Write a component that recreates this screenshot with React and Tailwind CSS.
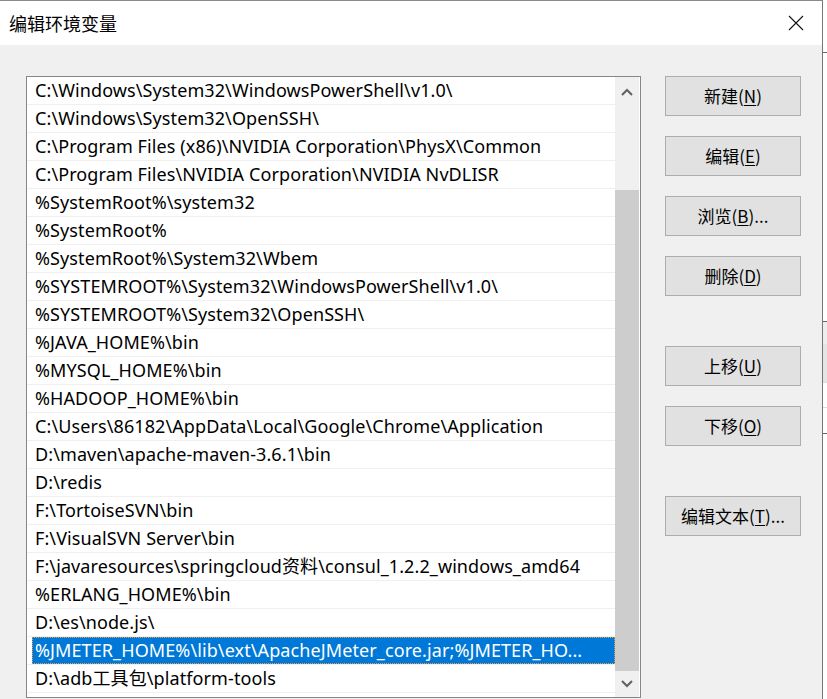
import React from "react";

const rows = [
  "C:\\Windows\\System32\\WindowsPowerShell\\v1.0\\",
  "C:\\Windows\\System32\\OpenSSH\\",
  "C:\\Program Files (x86)\\NVIDIA Corporation\\PhysX\\Common",
  "C:\\Program Files\\NVIDIA Corporation\\NVIDIA NvDLISR",
  "%SystemRoot%\\system32",
  "%SystemRoot%",
  "%SystemRoot%\\System32\\Wbem",
  "%SYSTEMROOT%\\System32\\WindowsPowerShell\\v1.0\\",
  "%SYSTEMROOT%\\System32\\OpenSSH\\",
  "%JAVA_HOME%\\bin",
  "%MYSQL_HOME%\\bin",
  "%HADOOP_HOME%\\bin",
  "C:\\Users\\86182\\AppData\\Local\\Google\\Chrome\\Application",
  "D:\\maven\\apache-maven-3.6.1\\bin",
  "D:\\redis",
  "F:\\TortoiseSVN\\bin",
  "F:\\VisualSVN Server\\bin",
  "F:\\javaresources\\springcloud资料\\consul_1.2.2_windows_amd64",
  "%ERLANG_HOME%\\bin",
  "D:\\es\\node.js\\",
  "%JMETER_HOME%\\lib\\ext\\ApacheJMeter_core.jar;%JMETER_HO...",
  "D:\\adb工具包\\platform-tools",
];

function Btn({ label, k, suffix = "" }) {
  return (
    <div className="w-[136px] h-[40px] bg-[#e1e1e1] border border-[#adadad] flex items-center justify-center text-[17px] text-black">
      <span>
        {label}(<span className="underline underline-offset-2">{k}</span>){suffix}
      </span>
    </div>
  );
}

export default function App() {
  return (
    <div
      className="w-[827px] h-[699px] flex bg-white overflow-hidden"
      style={{ fontFamily: '"Noto Sans", "Noto Sans CJK SC", sans-serif' }}
    >
      <div className="w-[823px] h-[699px] flex flex-col border-r border-[#777] border-t border-t-[#8a8a8a] bg-[#f0f0f0]">
        <div className="h-[44px] bg-white flex items-center justify-between pl-[9px] pr-[18px] shrink-0">
          <span className="text-[18px] text-black" style={{ fontFamily: '"Noto Sans CJK SC", sans-serif' }}>编辑环境变量</span>
          <svg width="16" height="16" viewBox="0 0 16 16">
            <path d="M1 1 L15 15 M15 1 L1 15" stroke="#111" strokeWidth="1.1" fill="none" />
          </svg>
        </div>
        <div className="flex pt-[31px] pl-[26px]">
          <div className="w-[615px] h-[622px] border border-[#828790] bg-white flex pr-[1px]">
            <div className="w-[588px] flex flex-col">
              {rows.map((r, i) => {
                const sel = i === 20;
                return (
                  <div key={i} className="h-[28px] flex flex-col shrink-0">
                    <div
                      className={
                        "h-[27px] flex items-center whitespace-nowrap overflow-hidden text-[18px] tracking-[0.1px] " +
                        (sel
                          ? "bg-[#0078d7] text-white ml-[5px] pl-[3px] outline-1 outline-dotted outline-[#f0a040] -outline-offset-1"
                          : "text-black pl-[8px]")
                      }
                    >
                      {r}
                    </div>
                    <div className="h-[1px] bg-[#f0f0f0]" />
                  </div>
                );
              })}
            </div>
            <div className="w-[24px] ml-auto bg-[#f0f0f0] flex flex-col">
              <div className="h-[30px] flex items-center justify-center shrink-0">
                <svg width="12" height="8" viewBox="0 0 12 8">
                  <path d="M1 7 L6 2 L11 7" stroke="#606060" strokeWidth="2" fill="none" />
                </svg>
              </div>
              <div className="h-[83px] shrink-0" />
              <div className="flex-1 bg-[#cdcdcd]" />
              <div className="h-[26px] flex items-center justify-center shrink-0">
                <svg width="12" height="8" viewBox="0 0 12 8">
                  <path d="M1 1 L6 6 L11 1" stroke="#606060" strokeWidth="2" fill="none" />
                </svg>
              </div>
            </div>
          </div>
          <div className="ml-[24px] flex flex-col" style={{ fontFamily: '"Noto Sans CJK SC", sans-serif' }}>
            <Btn label="新建" k="N" />
            <div className="h-[20px]" />
            <Btn label="编辑" k="E" />
            <div className="h-[20px]" />
            <Btn label="浏览" k="B" suffix="..." />
            <div className="h-[20px]" />
            <Btn label="删除" k="D" />
            <div className="h-[50px]" />
            <Btn label="上移" k="U" />
            <div className="h-[20px]" />
            <Btn label="下移" k="O" />
            <div className="h-[50px]" />
            <Btn label="编辑文本" k="T" suffix="..." />
          </div>
        </div>
      </div>
      <div className="flex-1 flex flex-col bg-white">
        <div className="h-[52px]" />
        <div className="h-[1px] bg-[#666]" />
        <div className="h-[268px]" />
        <div className="h-[1px] bg-[#666]" />
        <div className="h-[22px] bg-[#eee]" />
        <div className="h-[38px] bg-[#e5e5e5]" />
        <div className="h-[1px] bg-[#ddd]" />
        <div className="h-[24px]" />
        <div className="h-[1px] bg-[#ddd]" />
        <div className="h-[25px]" />
        <div className="h-[1px] bg-[#666]" />
      </div>
    </div>
  );
}
